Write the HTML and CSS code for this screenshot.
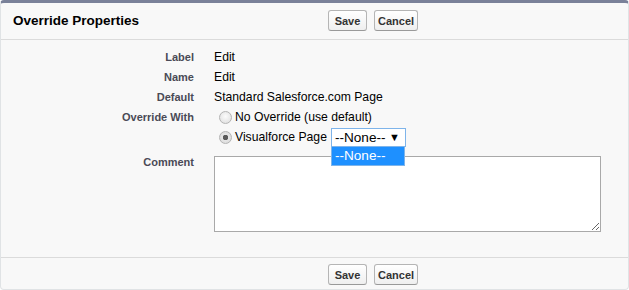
FILE: index.html
```html
<!DOCTYPE html>
<html>
<head>
    <title>Override Properties</title>
    <link rel="stylesheet" href="styles.css">
</head>
<body>
    <div class="panel">
        <!-- header with title and buttons -->
        <div class="panel-head">
            <h2>Override Properties</h2>
            <div class="buttons">
                <button class="btn btn-save">Save</button>
                <button class="btn">Cancel</button>
            </div>
        </div>

        <div class="panel-body">
            <div class="row">
                <div class="label">Label</div>
                <div class="value">Edit</div>
            </div>
            <div class="row">
                <div class="label">Name</div>
                <div class="value">Edit</div>
            </div>
            <div class="row">
                <div class="label">Default</div>
                <div class="value">Standard Salesforce.com Page</div>
            </div>
            <div class="row">
                <div class="label">Override With</div>
                <div class="value">
                    <label class="radio-line"><input type="radio" name="override">No Override (use default)</label>
                    <label class="radio-line"><input type="radio" name="override" checked>Visualforce Page
                        <span class="fake-select">
                            --None--<span class="arrow">&#9660;</span>
                            <span class="dropdown">--None--</span>
                        </span>
                    </label>
                </div>
            </div>
            <div class="row row-comment">
                <div class="label">Comment</div>
                <div class="value"><textarea class="comment"></textarea></div>
            </div>
        </div>

        <div class="panel-foot">
            <button class="btn btn-save">Save</button>
            <button class="btn">Cancel</button>
        </div>
    </div>
</body>
</html>
```

FILE: styles.css
```css
/* page */
body {
    margin: 0;
    background-color: #fff;
    font-family: Arial, "Liberation Sans", sans-serif;
}

.panel {
    height: 290px;
    box-sizing: border-box;
    background-color: #f8f8f8;
    border: 1px solid #e0e3e5;
    border-top: 3px solid #7a8199;
    border-radius: 4px;
    display: flex;
    flex-direction: column;
}

/* header */
.panel-head {
    display: grid;
    grid-template-columns: 315px auto;
    align-items: center;
    padding: 7px 0 8px 12px;
    border-bottom: 1px solid #dbdbdb;
}

.panel-head h2 {
    margin: 0;
    font-size: 13.5px;
    font-weight: bold;
    color: #000;
}

.buttons {
    display: flex;
    gap: 7px;
}

.btn {
    height: 21px;
    padding: 0 3px;
    font-family: Arial, "Liberation Sans", sans-serif;
    font-size: 11px;
    font-weight: bold;
    color: #333;
    background: linear-gradient(#ffffff, #efefef);
    border: 1px solid #b5b5b5;
    border-bottom-color: #999;
    border-radius: 3px;
    cursor: pointer;
}

.btn-save {
    min-width: 39px;
}

/* body rows */
.panel-body {
    flex: 1;
    padding-top: 7px;
}

.row {
    display: grid;
    grid-template-columns: 193px 1fr;
    column-gap: 20px;
    line-height: 20px;
}

.label {
    text-align: right;
    font-size: 11px;
    font-weight: bold;
    color: #4a4a56;
}

.value {
    font-size: 12.2px;
    color: #000;
}

.radio-line {
    display: flex;
    align-items: center;
    height: 20px;
}

.radio-line input {
    appearance: none;
    width: 13px;
    height: 13px;
    margin: 0 3px 0 5px;
    border: 1px solid #b4b4b4;
    border-radius: 50%;
    background: radial-gradient(circle at 50% 40%, #fbfbfb, #dcdcdc);
    box-sizing: border-box;
}

.radio-line input:checked {
    background: radial-gradient(circle, #5a5a5a 0, #5a5a5a 2.5px, #e6e6e6 3px, #d6d6d6 100%);
}

/* the open select */
.fake-select {
    position: relative;
    display: inline-block;
    width: 75px;
    height: 19px;
    margin-left: 4px;
    box-sizing: border-box;
    padding-left: 3px;
    border: 1px solid #7eb4ea;
    background-color: #fff;
    font-size: 13.6px;
    line-height: 17px;
    color: #000;
}

.arrow {
    position: absolute;
    right: 5px;
    top: 0;
    font-size: 11px;
}

.dropdown {
    position: absolute;
    left: -1px;
    top: 18px;
    width: 74px;
    height: 19px;
    box-sizing: border-box;
    padding-left: 3px;
    background-color: #1e90ff;
    border: 1px solid #7eb4ea;
    border-top: none;
    color: #fff;
    line-height: 18px;
    z-index: 2;
}

.row-comment {
    margin-top: 5px;
}

.comment {
    display: block;
    width: 387px;
    height: 76px;
    margin-top: 4px;
    box-sizing: border-box;
    border: 1px solid #a9a9a9;
    background-color: #fff;
}

/* footer */
.panel-foot {
    display: flex;
    gap: 7px;
    padding: 6px 0 4px 327px;
    border-top: 1px solid #dbdbdb;
}
```
